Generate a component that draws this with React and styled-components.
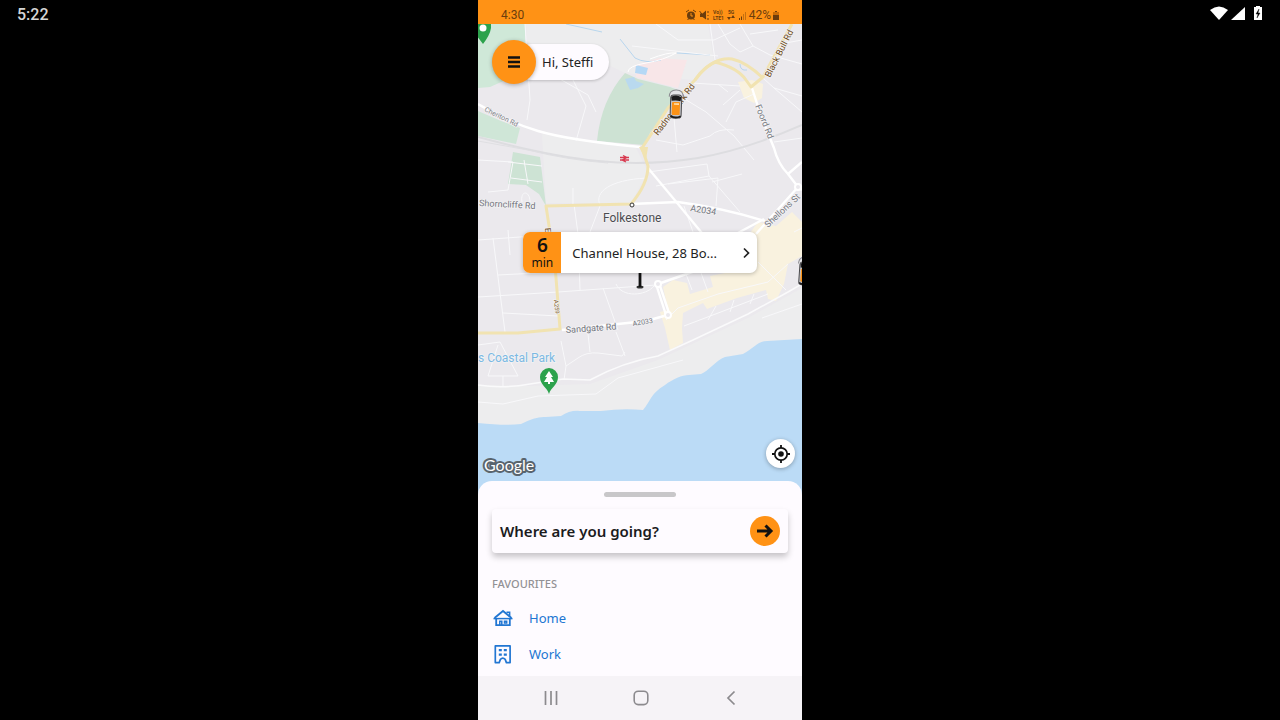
import styled, { createGlobalStyle } from "styled-components";

const favourites = [
  { name: "Home", icon: HomeIcon },
  { name: "Work", icon: WorkIcon },
];

//MARK -->Map data
const sideStreets = [
  "M47 24 L52 100 L49 120",
  "M52 62 L110 95 L118 112",
  "M95 80 L108 106 L98 141",
  "M154 46 L240 56",
  "M178 24 L200 40 L236 40 L262 28",
  "M232 24 L237 60",
  "M240 24 L252 44 L262 52 L275 46 L292 55",
  "M262 24 L275 46",
  "M272 34 L300 30",
  "M292 55 L324 64 M302 44 L324 40",
  "M214 83 L262 86",
  "M262 90 L245 105 M240 84 L250 92",
  "M205 98 L228 112 L256 136 L276 160",
  "M276 94 L258 102 L248 122",
  "M178 140 L205 145 L232 136 Q240 128 256 130",
  "M196 118 L199 152",
  "M285 78 L296 88 L324 96",
  "M296 88 L324 112",
  "M296 142 L324 138",
  "M170 172 L229 164 L231 176 L178 186",
  "M190 184 L240 178 L238 206",
  "M231 176 L262 212 M234 182 L264 174",
  "M206 206 L215 232",
  "M0 160 L35 162 L30 190 L10 192",
  "M30 162 L64 166 M46 160 L50 184 M33 178 L64 182",
  "M44 202 C42 190 52 190 52 202",
  "M95 204 L95 188",
  "M122 205 C116 192 132 180 168 178",
  "M122 206 L112 232",
  "M30 230 L32 255 M0 240 L70 235",
  "M15 238 L27 332",
  "M0 297 L80 292 L178 285",
  "M20 275 L78 272",
  "M25 313 L80 316",
  "M100 232 L102 290",
  "M125 288 L140 330",
  "M138 284 C144 298 168 296 176 286",
  "M96 204 L100 234",
  "M0 345 L22 342 L40 376",
  "M20 345 L10 376 L40 376 M25 376 V386",
  "M83 341 L88 366 L100 358 Q108 352 120 353 L144 356 L147 352",
  "M88 366 L86 380",
  "M110 334 L112 352 M138 332 L147 356",
  "M0 402 L25 404 L60 396 L118 394 L140 378 L205 360",
  "M188 320 L200 308 L240 294 L290 282 L310 264",
  "M208 274 L214 290 M222 270 L230 292",
  "M230 320 L238 306 M252 312 L256 300 M272 304 L276 294",
  "M206 326 L290 294",
  "M280 262 L308 290 M316 232 L324 228",
  "M284 318 L324 304",
];

const mainStreets = [
  "M0 104 Q30 122 60 131 T162 147",
  "M153 204 L200 202 Q245 208 287 221",
  "M258 234 L286 219",
  "M170 168 L200 204 L228 238",
  "M274 88 L283 116 L296 148 Q300 164 310 174 L320 187 L278 234",
  "M310 174 L324 162",
  "M320 187 L324 190",
  "M84 330 L168 321 L186 316",
  "M178 284 L188 315 M181 283 L191 313",
  "M180 284 L214 272 L240 264",
];

const coastRoad =
  "M0 385 Q25 389 52 384 L85 379 L112 380 Q145 362 180 356 L215 340 L270 314 L310 292 L324 284";

const labels = [
  { text: "Cheriton Rd", x: 6, y: 111, angle: 26, size: 7, color: "#7f8389" },
  { text: "Radnor Park Rd", x: 180, y: 136, angle: -53, size: 9, color: "#6d4a17" },
  { text: "Black Bull Rd", x: 292, y: 78, angle: -63, size: 9, color: "#6d4a17" },
  { text: "Foord Rd", x: 277, y: 106, angle: 68, size: 9, color: "#73777e" },
  { text: "Shellons St", x: 290, y: 228, angle: -43, size: 9, color: "#73777e" },
  { text: "Shorncliffe Rd", x: 1, y: 206, angle: 3, size: 9, color: "#73777e" },
  { text: "A2034", x: 212, y: 211, angle: 9, size: 9, color: "#73777e" },
  { text: "Sandgate Rd", x: 88, y: 333, angle: -4, size: 9, color: "#73777e" },
  { text: "A2033", x: 155, y: 326, angle: -9, size: 7, color: "#73777e" },
  { text: "A259", x: 76, y: 300, angle: 85, size: 6, color: "#7d5b25" },
  { text: "E", x: 67, y: 228, angle: 86, size: 8, color: "#6d4a17" },
  { text: "Folkestone", x: 125, y: 222, angle: 0, size: 12, color: "#4c4c50" },
  { text: "s Coastal Park", x: 0, y: 362, angle: 0, size: 12, color: "#7bb9e3" },
];

function Car({ x, y, angle }) {
  return (
    <g transform={`translate(${x} ${y}) rotate(${angle})`}>
      <path d="M-7 -7 Q-7 -14 0 -14 Q7 -14 7 -7" fill="#e4e4e8" stroke="#8d8d92" />
      <rect x="-5.5" y="-9" width="11" height="23" rx="3" fill="#c4c4c8" stroke="#4a4a4d" />
      <path d="M-4.5 -3 L-5 -7 Q0 -10 5 -7 L4.5 -3 Q0 -4 -4.5 -3Z" fill="#1b1b1d" />
      <rect x="-4" y="-2" width="8" height="13" rx="1" fill="#fb9217" />
      <path d="M-2 0 H3" stroke="#ffe0b0" strokeWidth="1.6" />
      <path d="M-5 12 Q0 15 5 12" fill="none" stroke="#1b1b1d" strokeWidth="1.8" />
    </g>
  );
}

function TownMap() {
  return (
    <MapDrawing viewBox="0 24 324 471" preserveAspectRatio="xMidYMin slice">
      <rect y="24" width="324" height="471" fill="#ebe9ed" />
      <g fill="#ededee">
        <path d="M48 24 H230 L236 62 L215 80 L147 73 L120 60 L50 62Z" />
        <path d="M64 134 L158 148 L170 172 L153 203 H68Z" />
        <path d="M0 385 L52 386 L112 384 L180 360 L270 318 L324 288 V495 H0Z" />
      </g>
      <path d="M0 24 H47 L48 76 L30 79 L12 87 L0 88Z" fill="#cfe8d8" />
      <path d="M0 111 L23 121 L42 128 L38 144 L0 136Z" fill="#cfe6d7" />
      <path
        d="M147 73 L160 79 L192 87 L205 92 L185 115 L172 133 L166 145 L119 141 Q123 100 147 73Z"
        fill="#cde2d3"
      />
      <path d="M35 152 L62 157 L68 206 L61 194 L48 185 L30 184Z" fill="#cde3d4" />
      <path d="M157 65 L181 58 L209 60 L200 88 L184 84 L158 77Z" fill="#f8e6e8" />
      <path d="M158 65 L170 68 L168 75 L157 73Z" fill="#b5d8f5" />
      <path d="M147 79 L156 77 L158 81 L166 84 L160 88 L152 90Z" fill="#b9d9ef" />
      <g fill="#f9f2df">
        <path d="M260 82 L274 80 L285 84 L284 98 L276 103 L266 98Z" />
        <path d="M272 233 L280 222 L298 226 L314 212 L324 222 V256 L310 264 L306 284 L298 301 L290 299 L288 290 L259 298 L229 309 L225 303 L205 313 L204 328 L205 343 L192 350 L187 328 L182 312 L190 310 L185 287 L195 280 L209 283 L212 294 L235 287 L232 276 L252 272 L270 268 L279 258Z" />
      </g>

      <g fill="none" stroke="#b8d6ee">
        <path d="M142 39 L157 58 Q168 64 183 60" />
        <path d="M88 24 L124 32 M199 53 L232 55 M262 64 Q262 71 269 70" />
      </g>
      <g fill="none" stroke="#f8f8fa">
        {sideStreets.map((street) => (
          <path key={street} d={street} />
        ))}
      </g>
      <path
        d="M150 72 Q150 66 168 63 T198 53 Q190 52 172 59"
        fill="none"
        stroke="#fff"
      />
      <path
        d="M0 137 Q70 156 120 161 T220 158 Q270 149 324 125"
        fill="none"
        stroke="#dddde0"
        strokeWidth="2"
      />
      <path d="M0 141 L50 150 Q90 160 130 163" fill="none" stroke="#dfdfe2" />
      <path d={coastRoad} fill="none" stroke="#fafafb" strokeWidth="1.5" />
      <g fill="none" stroke="#fff" strokeWidth="2.4" strokeLinejoin="round">
        {mainStreets.map((street) => (
          <path key={street} d={street} />
        ))}
      </g>
      <g fill="none" stroke="#f1e3b1" strokeWidth="3" strokeLinejoin="round">
        <path d="M0 333 L40 333 L82 329 L77 265 L68 206 L153 204 Q170 184 170 166 L164 148 L172 136 L190 108 L217 80 Q227 65 240 61" />
        <path d="M217 80 Q234 57 254 59 Q268 62 285 78" />
        <path d="M237 62 Q260 68 268 80 L273 87 L285 77 L298 53 L314 24" />
      </g>
      <path d="M161 147 H170 L168 160Z" fill="#f1e3b1" />
      <g fill="#ebe9ed" stroke="#fff" strokeWidth="2">
        <circle cx="180" cy="284" r="3" />
        <circle cx="190" cy="315" r="3" />
        <circle cx="320" cy="187" r="3" />
      </g>
      <path
        d="M0 423 Q28 426 43 424 Q58 416 68 417 L83 416 Q92 410 102 411 L123 411 Q145 408 165 410 C173 401 172 394 187 385 C195 379 204 375 211 375 L223 374 C231 371 238 360 247 357 L265 354 C276 348 280 341 289 341 L324 339 V495 H0Z"
        fill="#bbdbf6"
      />

      <g fontFamily="Roboto, sans-serif" stroke="#f3f2f4" strokeWidth="1.5" paintOrder="stroke">
        {labels.map((label) => (
          <text
            key={label.text}
            transform={`translate(${label.x} ${label.y}) rotate(${label.angle})`}
            fontSize={label.size}
            fill={label.color}
          >
            {label.text}
          </text>
        ))}
      </g>
      <circle cx="154" cy="205" r="2" fill="#fff" stroke="#333" />
      <path
        d="M142 157.5 H151 M142 160 H151 M145 155.5 L149 157.5 L144 160 L148 162"
        fill="none"
        stroke="#d83a50"
        strokeWidth="1.3"
      />

      {/* park pins */}
      <path d="M-3 24 H13 V28 Q12 35 5 44 Q0 37 -3 34Z" fill="#2ca24c" />
      <circle cx="5" cy="28" r="3.5" fill="#fff" />
      <path
        d="M71 394 C69 387 62 385 62 377 A9 9 0 0 1 80 377 C80 385 73 387 71 394Z"
        fill="#2ca24c"
      />
      <path d="M71 371 L75 377 H73 L76 382 H72 V384 H70 V382 H66 L69 377 H67Z" fill="#fff" />

      <Car x={198} y={104} angle={2} />
      <Car x={327} y={271} angle={4} />

      <text
        x="6"
        y="471"
        fontFamily="Lato, sans-serif"
        fontSize="16"
        fill="#fff"
        stroke="#59646d"
        strokeWidth="4"
        strokeLinejoin="round"
        paintOrder="stroke"
      >
        Google
      </text>
    </MapDrawing>
  );
}

//MARK -->Icons
function HomeIcon() {
  return (
    <svg width="22" height="22" viewBox="0 0 22 22" fill="none" stroke="currentColor">
      <path d="M2.5 11 L11 4 L19.5 11" strokeWidth="1.8" />
      <path d="M1.5 11.6 H20.5" strokeWidth="1.5" />
      <path d="M14.5 5.3 H17.6 V9.5" strokeWidth="1.6" />
      <path d="M4.2 11.5 V18.2 H17.8 V11.5" strokeWidth="1.8" />
      <path d="M7.8 18 V14.3 H9.8 V18 M12.5 14.3 H14.7 V15.9 H12.5Z" strokeWidth="1.5" />
    </svg>
  );
}

function WorkIcon() {
  return (
    <svg width="22" height="22" viewBox="0 0 22 22" fill="none" stroke="currentColor">
      <path
        d="M3.3 2.9 H18.1 V19.6 H14.4 L13.2 16.4 Q10.8 14 8.4 16.4 L7.2 19.6 H3.3Z"
        strokeWidth="1.7"
        strokeLinejoin="round"
      />
      <path d="M6.8 7.2 H9.8 M11.8 7.2 H14.8 M6.8 11.6 H9.8 M11.8 11.6 H14.8" strokeWidth="2.2" />
    </svg>
  );
}

function PhoneStatusIcons() {
  return (
    <svg width="61" height="12" viewBox="0 0 61 12" fill="currentColor">
      <circle cx="5" cy="6.5" r="4" />
      <path d="M0 3 L3 1 M10 3 L7 1 M1.5 11 L3 9.5 M8.5 11 L7 9.5" stroke="currentColor" />
      <path d="M5 4 V7 H7" fill="none" stroke="#ff9215" />
      <path d="M14 4.5 H16.5 L20 1.5 V10.5 L16.5 8 H14Z" />
      <path d="M13.5 2 L20 10 M22 2 V4 M22 6 V7 M22 9 V11" stroke="currentColor" />
      <g fontFamily="Roboto, sans-serif" fontSize="5" fontWeight="700">
        <text x="27" y="5">Vo))</text>
        <text x="27" y="11">LTE1</text>
        <text x="42" y="5">5G</text>
      </g>
      <path d="M41 8 L43 11 L45 8Z M45 9 L47 6 L49 9Z" />
      <path d="M53 9 h1 v2 h-1Z M55 7.5 h1 v3.5 h-1Z" />
      <path d="M57 5 h1 v6 h-1Z M59 3 h1 v8 h-1Z" opacity="0.4" />
    </svg>
  );
}

function App() {
  return (
    <>
      <GlobalStyle />
      <Screen>
        <DeviceTime>5:22</DeviceTime>
        <Phone>
          <PhoneStatus>
            <span>4:30</span>
            <StatusGroup>
              <PhoneStatusIcons />
              <span>42%</span>
              <svg width="6" height="9" viewBox="0 0 6 9">
                <path d="M2 0 H4 V1 H6 V9 H0 V1 H2Z" fill="#c96d08" />
                <path d="M0 4 H6 V9 H0Z M2 0 H4 V1 H2Z" fill="currentColor" />
              </svg>
            </StatusGroup>
          </PhoneStatus>

          <MapArea>
            <TownMap />
            <Greeting>
              <MenuButton aria-label="Menu">
                <svg width="14" height="12" viewBox="0 0 14 12">
                  <path d="M1 1.5 H13 M1 6 H13 M1 10.5 H13" stroke="#111" strokeWidth="2.6" />
                </svg>
              </MenuButton>
              <GreetingText>Hi, Steffi</GreetingText>
            </Greeting>
            <Pickup>
              <PickupCard>
                <Eta>
                  <EtaNumber>6</EtaNumber>
                  <EtaUnit>min</EtaUnit>
                </Eta>
                <Address>Channel House, 28 Bo...</Address>
                <svg width="8" height="12" viewBox="0 0 8 12" fill="none">
                  <path d="M2 1.5 L6.5 6 L2 10.5" stroke="#222" strokeWidth="1.7" />
                </svg>
              </PickupCard>
              <svg width="8" height="16" viewBox="0 0 8 16">
                <ellipse cx="4" cy="14" rx="3.5" ry="1.5" fill="#333" />
                <path d="M4 0 V14" stroke="#111" strokeWidth="2.8" />
              </svg>
            </Pickup>
            <LocateButton aria-label="Locate me">
              <svg width="18" height="18" viewBox="0 0 18 18" fill="none" stroke="#111">
                <circle cx="9" cy="9" r="6.2" strokeWidth="1.7" />
                <circle cx="9" cy="9" r="2.8" fill="#111" stroke="none" />
                <path d="M9 0 V3 M9 15 V18 M0 9 H3 M15 9 H18" strokeWidth="1.8" />
              </svg>
            </LocateButton>
          </MapArea>

          <Sheet>
            <Handle />
            <Destination>
              Where are you going?
              <GoBadge>
                <svg width="18" height="16" viewBox="0 0 18 16" fill="none">
                  <path d="M1 8 H15 M9.5 2.5 L15 8 L9.5 13.5" stroke="#111" strokeWidth="3" />
                </svg>
              </GoBadge>
            </Destination>
            <SectionTitle>FAVOURITES</SectionTitle>
            <FavouriteList>
              {favourites.map(({ name, icon: Icon }) => (
                <li key={name}>
                  <Favourite href={`#${name.toLowerCase()}`}>
                    <Icon />
                    {name}
                  </Favourite>
                </li>
              ))}
            </FavouriteList>
          </Sheet>

          <NavBar>
            <NavButton aria-label="Recent apps">
              <svg width="16" height="16" viewBox="0 0 16 16">
                <path d="M2.5 1 V15 M8 1 V15 M13.5 1 V15" stroke="#8c8a8e" strokeWidth="1.7" />
              </svg>
            </NavButton>
            <NavButton aria-label="Home screen">
              <svg width="16" height="16" viewBox="0 0 16 16" fill="none">
                <rect x="1.2" y="1.2" width="13.6" height="13.4" rx="4" stroke="#8c8a8e" strokeWidth="1.6" />
              </svg>
            </NavButton>
            <NavButton aria-label="Back">
              <svg width="16" height="16" viewBox="0 0 16 16" fill="none">
                <path d="M11.5 1.5 L5 8 L11.5 14.5" stroke="#8c8a8e" strokeWidth="1.7" />
              </svg>
            </NavButton>
          </NavBar>
        </Phone>
        <DeviceIcons>
          <svg width="54" height="16" viewBox="0 0 54 16" fill="#fff">
            <path d="M0 4 Q9 -3 18 4 L9 14Z" />
            <path d="M35 1 V14 H21Z" />
            <path d="M46 0 H50 V1 H52 V14 H44 V1 H46Z" />
            <path d="M49 3 L46 8 H48 L47 12 L50 7 H48Z" fill="#000" stroke="#000" strokeWidth="0.4" />
          </svg>
        </DeviceIcons>
      </Screen>
    </>
  );
}

const GlobalStyle = createGlobalStyle`
  * {
    box-sizing: border-box;
  }
  body {
    margin: 0;
    background: #000;
    font-family: "Noto Sans", "Open Sans", sans-serif;
  }
  button {
    border: 0;
    padding: 0;
    font: inherit;
    color: inherit;
    cursor: pointer;
  }
  svg {
    display: block;
    flex-shrink: 0;
  }
`;

const Screen = styled.div`
  display: grid;
  grid-template-columns: 1fr 45vh 1fr;
  min-height: 100vh;
`;

const DeviceTime = styled.div`
  padding: 5px 17px;
  color: #d6d6d6;
  font-family: Roboto, sans-serif;
  font-size: 16px;
  font-weight: 500;
  line-height: 20px;
`;

const DeviceIcons = styled.div`
  display: flex;
  justify-content: flex-end;
  padding: 6px 16px;
`;

const Phone = styled.main`
  display: flex;
  flex-direction: column;
  min-width: 0;
  background: #fefbff;
`;

const PhoneStatus = styled.header`
  display: flex;
  align-items: flex-end;
  justify-content: space-between;
  height: 24px;
  padding: 0 23px 2px;
  background: #ff9215;
  color: #6b3d0d;
  font-family: Roboto, sans-serif;
  font-size: 12px;
  line-height: 14px;
`;

const StatusGroup = styled.div`
  display: flex;
  align-items: center;
  gap: 2px;
`;

const MapArea = styled.section`
  position: relative;
  flex: 1;
  margin-bottom: -14px;
`;

const MapDrawing = styled.svg`
  position: absolute;
  inset: 0;
  width: 100%;
  height: 100%;
`;

const Greeting = styled.div`
  position: absolute;
  top: 16px;
  left: 14px;
  display: flex;
  align-items: center;
`;

const MenuButton = styled.button`
  display: grid;
  place-items: center;
  width: 44px;
  height: 44px;
  border-radius: 50%;
  background: #ff9215;
  box-shadow: 0 1px 4px rgba(0, 0, 0, 0.3);
  z-index: 1;
`;

const GreetingText = styled.div`
  margin-left: -22px;
  padding: 0 16px 0 28px;
  border-radius: 18px;
  background: #fefbff;
  box-shadow: 0 1px 3px rgba(0, 0, 0, 0.2);
  color: #222;
  font-size: 13px;
  line-height: 36px;
`;

const Pickup = styled.div`
  position: absolute;
  top: 208px;
  left: 14%;
  right: 14%;
  display: flex;
  flex-direction: column;
  align-items: center;
`;

const PickupCard = styled.button`
  display: flex;
  align-items: center;
  width: 100%;
  height: 41px;
  padding-right: 7px;
  border-radius: 7px;
  overflow: hidden;
  background: #fff;
  box-shadow: 0 1px 4px rgba(0, 0, 0, 0.25);
`;

const Eta = styled.span`
  display: flex;
  flex-direction: column;
  align-items: center;
  justify-content: center;
  align-self: stretch;
  width: 38px;
  background: #ff9215;
  color: #111;
`;

const EtaNumber = styled.strong`
  font-size: 19px;
  font-weight: 600;
  line-height: 20px;
`;

const EtaUnit = styled.span`
  font-size: 12px;
  line-height: 16px;
`;

const Address = styled.span`
  flex: 1;
  padding-left: 11px;
  color: #222;
  font-size: 13px;
  text-align: left;
  white-space: nowrap;
`;

const LocateButton = styled.button`
  position: absolute;
  right: 7px;
  bottom: 27px;
  display: grid;
  place-items: center;
  width: 29px;
  height: 29px;
  border-radius: 50%;
  background: #fff;
  box-shadow: 0 1px 4px rgba(0, 0, 0, 0.3);
`;

const Sheet = styled.section`
  position: relative;
  padding: 11px 14px 4px;
  border-radius: 14px 14px 0 0;
  background: #fefbff;
`;

const Handle = styled.div`
  width: 72px;
  height: 5px;
  margin: 0 auto 12px;
  border-radius: 3px;
  background: #c8c7c9;
`;

const Destination = styled.button`
  display: flex;
  align-items: center;
  justify-content: space-between;
  width: 100%;
  height: 44px;
  padding: 0 8px;
  border-radius: 4px;
  background: #fefbff;
  box-shadow: 0 4px 6px rgba(0, 0, 0, 0.22);
  color: #1b1b1d;
  font-size: 15px;
  font-weight: 600;
`;

const GoBadge = styled.span`
  display: grid;
  place-items: center;
  width: 30px;
  height: 30px;
  border-radius: 50%;
  background: #ff9215;
`;

const SectionTitle = styled.h2`
  margin: 23px 0 8px;
  color: #929195;
  font-size: 11px;
  font-weight: 500;
  line-height: 16px;
`;

const FavouriteList = styled.ul`
  margin: 0;
  padding: 0;
  list-style: none;
`;

const Favourite = styled.a`
  display: flex;
  align-items: center;
  gap: 15px;
  height: 36px;
  color: #2176d2;
  font-size: 13px;
  text-decoration: none;
`;

const NavBar = styled.nav`
  display: flex;
  height: 44px;
  padding: 0 26px 0 28px;
  background: #f6f3f7;
`;

const NavButton = styled.button`
  display: grid;
  flex: 1;
  place-items: center;
  background: transparent;
`;

export default App;
